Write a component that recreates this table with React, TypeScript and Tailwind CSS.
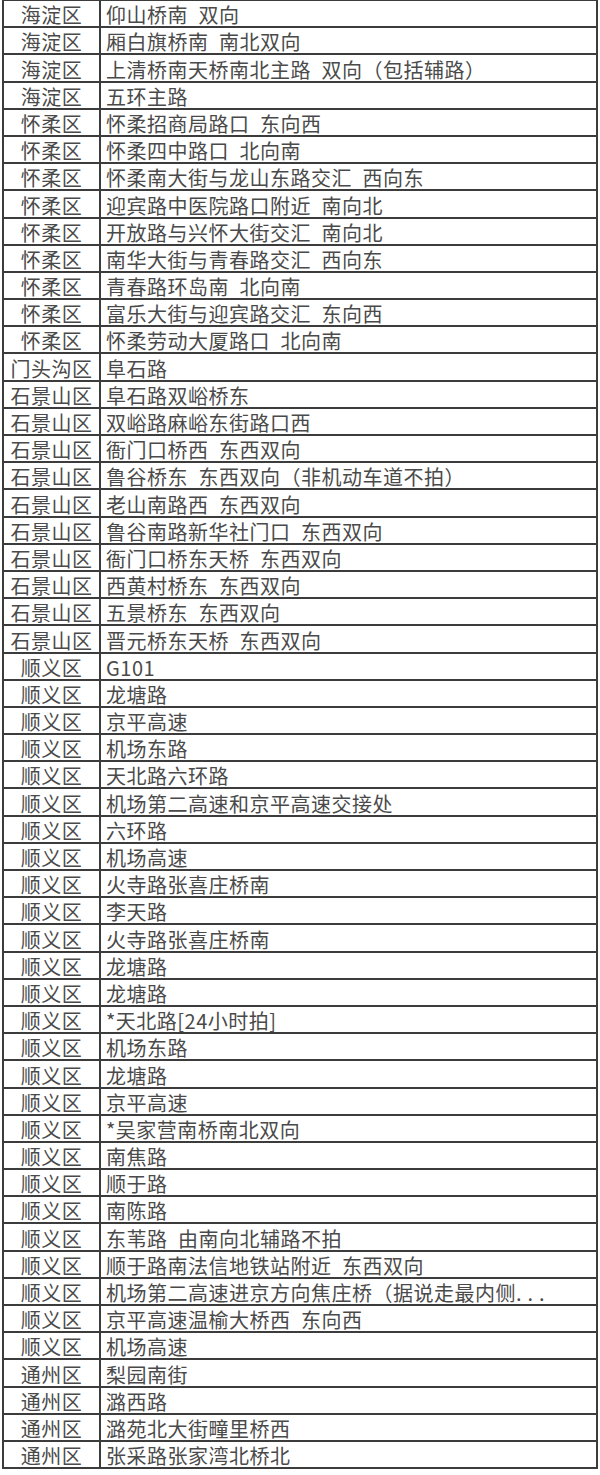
import React from 'react';

const rows: [string, string][] = [
  ['海淀区', '仰山桥南 双向'],
  ['海淀区', '厢白旗桥南 南北双向'],
  ['海淀区', '上清桥南天桥南北主路 双向（包括辅路）'],
  ['海淀区', '五环主路'],
  ['怀柔区', '怀柔招商局路口 东向西'],
  ['怀柔区', '怀柔四中路口 北向南'],
  ['怀柔区', '怀柔南大街与龙山东路交汇 西向东'],
  ['怀柔区', '迎宾路中医院路口附近 南向北'],
  ['怀柔区', '开放路与兴怀大街交汇 南向北'],
  ['怀柔区', '南华大街与青春路交汇 西向东'],
  ['怀柔区', '青春路环岛南 北向南'],
  ['怀柔区', '富乐大街与迎宾路交汇 东向西'],
  ['怀柔区', '怀柔劳动大厦路口 北向南'],
  ['门头沟区', '阜石路'],
  ['石景山区', '阜石路双峪桥东'],
  ['石景山区', '双峪路麻峪东街路口西'],
  ['石景山区', '衙门口桥西 东西双向'],
  ['石景山区', '鲁谷桥东 东西双向（非机动车道不拍）'],
  ['石景山区', '老山南路西 东西双向'],
  ['石景山区', '鲁谷南路新华社门口 东西双向'],
  ['石景山区', '衙门口桥东天桥 东西双向'],
  ['石景山区', '西黄村桥东 东西双向'],
  ['石景山区', '五景桥东 东西双向'],
  ['石景山区', '晋元桥东天桥 东西双向'],
  ['顺义区', 'G101'],
  ['顺义区', '龙塘路'],
  ['顺义区', '京平高速'],
  ['顺义区', '机场东路'],
  ['顺义区', '天北路六环路'],
  ['顺义区', '机场第二高速和京平高速交接处'],
  ['顺义区', '六环路'],
  ['顺义区', '机场高速'],
  ['顺义区', '火寺路张喜庄桥南'],
  ['顺义区', '李天路'],
  ['顺义区', '火寺路张喜庄桥南'],
  ['顺义区', '龙塘路'],
  ['顺义区', '龙塘路'],
  ['顺义区', '*天北路[24小时拍]'],
  ['顺义区', '机场东路'],
  ['顺义区', '龙塘路'],
  ['顺义区', '京平高速'],
  ['顺义区', '*吴家营南桥南北双向'],
  ['顺义区', '南焦路'],
  ['顺义区', '顺于路'],
  ['顺义区', '南陈路'],
  ['顺义区', '东苇路 由南向北辅路不拍'],
  ['顺义区', '顺于路南法信地铁站附近 东西双向'],
  ['顺义区', '机场第二高速进京方向焦庄桥（据说走最内侧...'],
  ['顺义区', '京平高速温榆大桥西 东向西'],
  ['顺义区', '机场高速'],
  ['通州区', '梨园南街'],
  ['通州区', '潞西路'],
  ['通州区', '潞苑北大街疃里桥西'],
  ['通州区', '张采路张家湾北桥北'],
];

// half-width gaps like the original sheet font; trailing dots spaced wider
const Place: React.FC<{ text: string }> = ({ text }) => {
  const t = text.replace(/ /g, '\u2002');
  if (t.endsWith('...')) {
    return (
      <>
        {t.slice(0, -3)}
        <span className="tracking-[6px]">...</span>
      </>
    );
  }
  return <>{t}</>;
};

const App: React.FC = () => {
  return (
    <div
      className="w-[600px] h-[1475px] bg-white overflow-hidden text-[#4a4a4a]"
      style={{ fontFamily: '"Noto Sans CJK SC", "Liberation Serif", serif' }}
    >
      <div className="ml-[2px] w-[596px] border-l-2 border-r-2 border-t border-[#3c3c3c]">
        {rows.map(([district, place], i) => (
          <div
            key={i}
            className="grid grid-cols-[97px_1fr] h-[27.2px] border-b-2 border-[#3c3c3c] box-border"
          >
            <div className="flex items-end justify-center border-r-2 border-[#3c3c3c] text-[20px] leading-[22px] tracking-[0.5px] whitespace-nowrap">
              {district}
            </div>
            <div className="flex items-end pl-[5px] text-[20px] leading-[22px] tracking-[0.5px] whitespace-nowrap">
              <Place text={place} />
            </div>
          </div>
        ))}
      </div>
    </div>
  );
};

export default App;
